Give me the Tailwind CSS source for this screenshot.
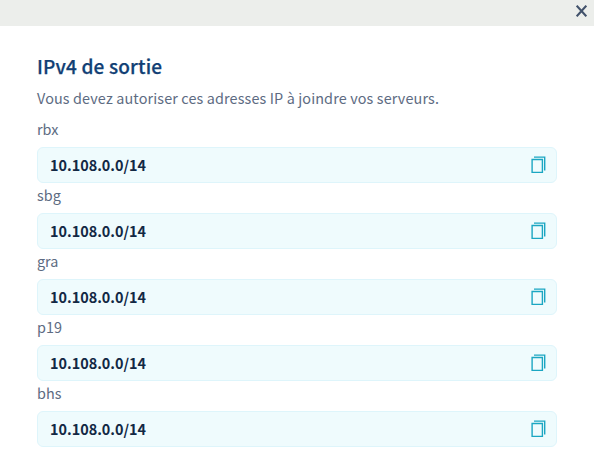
<!DOCTYPE html>
<html lang="fr">
<head>
<meta charset="utf-8">
<title>IPv4 de sortie</title>
<script src="https://cdn.jsdelivr.net/npm/@tailwindcss/browser@4"></script>
</head>
<body class="h-[474px] w-[594px] overflow-hidden bg-white font-['Noto_Sans_CJK_SC','Noto_Sans',sans-serif] text-[#5d6b82]">
<svg class="hidden">
  <symbol id="copy" viewBox="0 0 16 18"><path d="M1.1 3.5h10.3v12.9H1.1zM3 1.1h10.7v13.4" fill="none" stroke="currentColor" stroke-width="1.4"/></symbol>
</svg>
<header class="flex h-[26px] items-start justify-end bg-[#eceeeb] pt-[5px] pr-[7px]">
  <button aria-label="Fermer"><svg class="block h-3 w-[11px] text-[#42526b]" viewBox="0 0 11 12"><path d="M.7 .7l9.6 10.6M10.3 .7L.7 11.3" stroke="currentColor" stroke-width="2.1"/></svg></button>
</header>
<main class="px-[37px] pt-[26px]">
  <h1 class="h-[27px] text-[19px] leading-[27px] font-medium tracking-[0.16px] text-[#113f75] [-webkit-text-stroke:0.25px_#113f75]">IPv4 de sortie</h1>
  <p class="mt-[7px] h-6 text-[14.4px] leading-6 tracking-[0.125px] whitespace-nowrap">Vous devez autoriser ces adresses IP à joindre vos serveurs.</p>
  <dl class="mt-[7px]">
    <dt class="h-[30px] text-[14.4px] leading-6">rbx</dt>
    <dd class="flex h-9 items-center justify-between rounded-md border border-[#def5fb] bg-[#effbfd] pr-[9px] pl-3 text-[14.4px] font-bold text-[#122844]"><span>10.108.0.0/14</span><svg class="h-[18px] w-4 text-[#1ba6c2]"><use href="#copy"/></svg></dd>
    <dt class="h-[30px] text-[14.4px] leading-6">sbg</dt>
    <dd class="flex h-9 items-center justify-between rounded-md border border-[#def5fb] bg-[#effbfd] pr-[9px] pl-3 text-[14.4px] font-bold text-[#122844]"><span>10.108.0.0/14</span><svg class="h-[18px] w-4 text-[#1ba6c2]"><use href="#copy"/></svg></dd>
    <dt class="h-[30px] text-[14.4px] leading-6">gra</dt>
    <dd class="flex h-9 items-center justify-between rounded-md border border-[#def5fb] bg-[#effbfd] pr-[9px] pl-3 text-[14.4px] font-bold text-[#122844]"><span>10.108.0.0/14</span><svg class="h-[18px] w-4 text-[#1ba6c2]"><use href="#copy"/></svg></dd>
    <dt class="h-[30px] text-[14.4px] leading-6">p19</dt>
    <dd class="flex h-9 items-center justify-between rounded-md border border-[#def5fb] bg-[#effbfd] pr-[9px] pl-3 text-[14.4px] font-bold text-[#122844]"><span>10.108.0.0/14</span><svg class="h-[18px] w-4 text-[#1ba6c2]"><use href="#copy"/></svg></dd>
    <dt class="h-[30px] text-[14.4px] leading-6">bhs</dt>
    <dd class="flex h-9 items-center justify-between rounded-md border border-[#def5fb] bg-[#effbfd] pr-[9px] pl-3 text-[14.4px] font-bold text-[#122844]"><span>10.108.0.0/14</span><svg class="h-[18px] w-4 text-[#1ba6c2]"><use href="#copy"/></svg></dd>
  </dl>
</main>
</body>
</html>
